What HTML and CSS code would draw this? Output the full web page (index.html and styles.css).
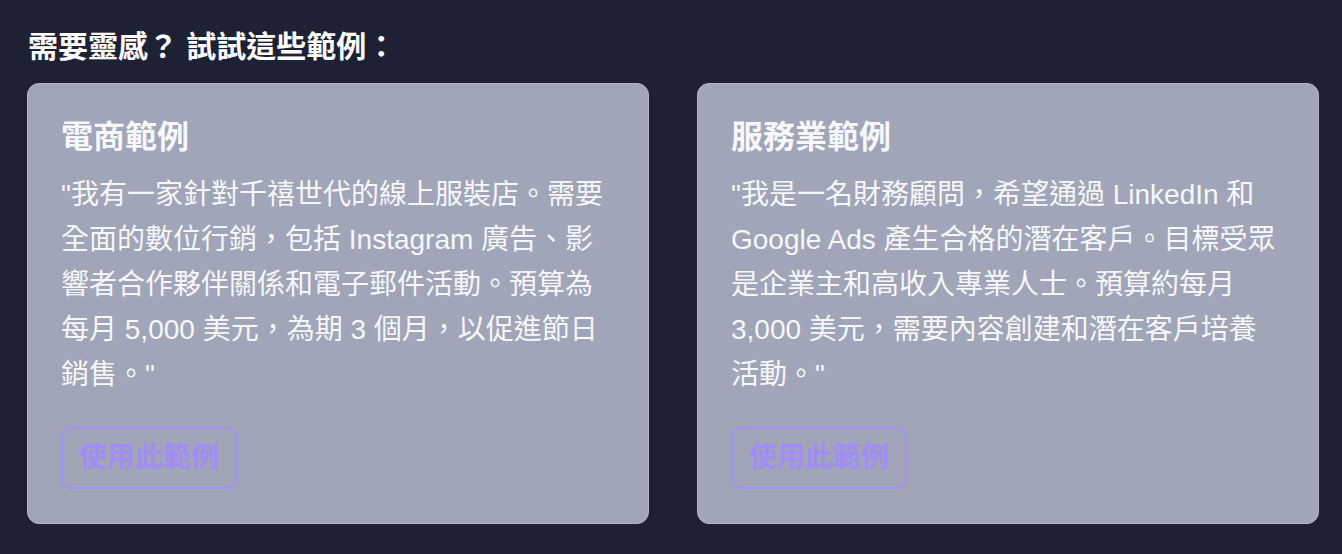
FILE: index.html
```html
<!DOCTYPE html>
<html lang="zh-Hant">
<head>
<meta charset="utf-8">
<link rel="stylesheet" href="styles.css">
</head>
<body>
<section class="examples">
  <h2 class="examples-title">需要靈感？ 試試這些範例：</h2>
  <div class="examples-grid">
    <article class="card">
      <h3 class="card-title">電商範例</h3>
      <p class="card-text">"我有一家針對千禧世代的線上服裝店。需要全面的數位行銷，包括 Instagram 廣告、影響者合作夥伴關係和電子郵件活動。預算為每月 5,000 美元，為期 3 個月，以促進節日銷售。"</p>
      <button class="card-btn">使用此範例</button>
    </article>
    <article class="card">
      <h3 class="card-title">服務業範例</h3>
      <p class="card-text">"我是一名財務顧問，希望通過 LinkedIn 和 Google Ads 產生合格的潛在客戶。目標受眾是企業主和高收入專業人士。預算約每月 3,000 美元，需要內容創建和潛在客戶培養活動。"</p>
      <button class="card-btn">使用此範例</button>
    </article>
  </div>
</section>
</body>
</html>
```

FILE: styles.css
```css
html, body {
  margin: 0;
  padding: 0;
  background: #1d2133;
}
body {
  font-family: "Liberation Sans", "Noto Sans CJK SC", sans-serif;
  color: #f4f5f8;
}
.examples {
  padding: 28px 23px 30px 27px;
}
.examples-title {
  margin: 0 0 17px 1px;
  font-size: 30px;
  line-height: 38px;
  font-weight: 700;
  color: #ffffff;
}
.examples-grid {
  display: grid;
  grid-template-columns: 622px 622px;
  column-gap: 48px;
}
.card {
  background: #a0a5b8;
  border: 1px solid #b3b7c7;
  border-radius: 12px;
  padding: 33px 38px 34px 33px;
  display: flex;
  flex-direction: column;
  align-items: flex-start;
}
.card-title {
  margin: 0 0 15px 0;
  font-size: 32px;
  line-height: 40px;
  font-weight: 600;
  color: #f6f7fa;
}
.card-text {
  margin: 0 0 30px 0;
  font-size: 28px;
  line-height: 45px;
  color: #f6f7fa;
}
.card-btn {
  font-family: inherit;
  font-size: 28px;
  line-height: 38px;
  font-weight: 600;
  color: #a08cf6;
  background: transparent;
  border: 2px solid #a48ff8;
  border-radius: 10px;
  padding: 10px 16px;
  cursor: pointer;
}
```
